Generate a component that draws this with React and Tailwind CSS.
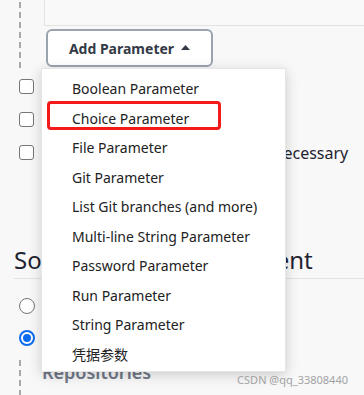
import React from 'react'

const menuItems = [
  'Boolean Parameter',
  'Choice Parameter',
  'File Parameter',
  'Git Parameter',
  'List Git branches (and more)',
  'Multi-line String Parameter',
  'Password Parameter',
  'Run Parameter',
  'String Parameter',
  '凭据参数',
]

const checkRows = ['Throttle builds', 'Disable this project', 'Execute concurrent builds if necessary']

function DashedLine({ height }) {
  return (
    <div
      className="w-[2px] shrink-0 bg-[repeating-linear-gradient(to_bottom,transparent_0_2px,#a9a9a9_2px_8px,transparent_8px_10px)]"
      style={{ height }}
    />
  )
}

export default function App() {
  return (
    <div className="relative w-[364px] h-[395px] overflow-hidden bg-[#f8f8f8] font-['Noto_Sans','Noto_Sans_CJK_SC',sans-serif] text-[#1f2330]">
      {/* parameters block */}
      <div className="flex">
        <div className="w-[44px] shrink-0 pl-[19px]">
          <DashedLine height={68} />
        </div>
        <div className="flex-1">
          <div className="h-[26px] border-l border-b border-[#e2e2e2] bg-[#f9f9f9]" />
          <button className="ml-[2px] mt-[3px] w-[167px] h-[38px] flex items-center justify-center gap-[7px] bg-white border-2 border-[#9aa4ae] rounded-[6px] text-[14px] font-bold text-[#333a46]">
            <span>Add Parameter</span>
            <svg width="9" height="5" viewBox="0 0 9 5" className="mt-[-1px]">
              <path d="M0 5 L4.5 0 L9 5 Z" fill="#333a46" />
            </svg>
          </button>
        </div>
      </div>

      {/* checkbox options */}
      <div className="pt-[2px]">
        {checkRows.map((label) => (
          <div key={label} className="h-[33px] flex items-center">
            <div className="ml-[19px] w-[15px] h-[15px] shrink-0 rounded-[3px] border border-[#767676] bg-white" />
            <span className="ml-[27px] text-[16px] whitespace-nowrap">{label}</span>
          </div>
        ))}
      </div>

      {/* SCM section */}
      <div className="ml-[14px] mt-[75px] h-[35px] border-b border-[#e2e2e2]">
        <h2 className="text-[24px] leading-[32px] font-normal whitespace-nowrap">Source Code Management</h2>
      </div>
      <div className="mt-[11px]">
        <div className="h-[32px] flex items-center">
          <div className="ml-[19px] w-[16px] h-[16px] rounded-full border-[1.5px] border-[#767676] bg-white" />
          <span className="ml-[8px] text-[16px]">None</span>
        </div>
        <div className="h-[32px] flex items-center">
          <div className="ml-[19px] w-[16px] h-[16px] rounded-full border-2 border-[#0b6cf0] bg-white flex items-center justify-center">
            <div className="w-[8px] h-[8px] rounded-full bg-[#0b6cf0]" />
          </div>
          <span className="ml-[8px] text-[16px]">Git</span>
        </div>
      </div>
      <div className="flex pl-[19px] mt-[4px]">
        <DashedLine height={40} />
        <div className="ml-[21px] mt-[2px] text-[18px] leading-[24px] font-semibold text-[#6f7787]">Repositories</div>
      </div>

      {/* dropdown menu */}
      <div className="absolute left-[41px] top-[68px] w-[245px] h-[304px] bg-white border border-[#e6e6e6] shadow-[0_3px_12px_rgba(0,0,0,0.18)] pt-[5px]">
        {menuItems.map((item) => (
          <div key={item} className="h-[29.5px] flex items-center pl-[30px] text-[14px] text-[#222] whitespace-nowrap">
            {item}
          </div>
        ))}
      </div>

      {/* annotation */}
      <div className="absolute left-[47px] top-[101px] w-[174px] h-[29px] border-[3px] border-[#f51a1a] rounded-[4px]" />

      <div className="absolute right-[16px] top-[372px] text-[11px] text-[#a3a3a3]">CSDN @qq_33808440</div>
    </div>
  )
}
